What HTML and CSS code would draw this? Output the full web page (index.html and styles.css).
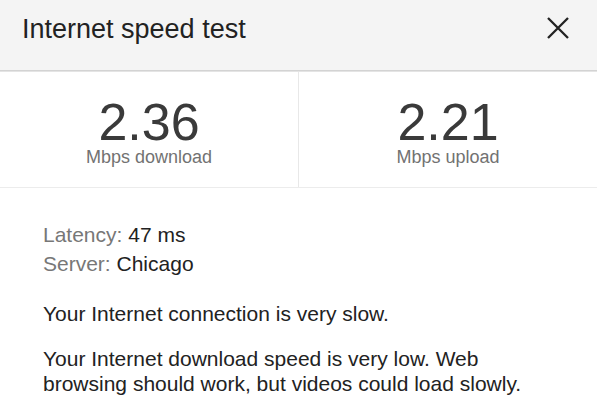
FILE: index.html
```html
<!DOCTYPE html>
<html lang="en">
<head>
    <meta charset="UTF-8">
    <meta name="viewport" content="width=device-width, initial-scale=1.0">
    <title>Internet speed test</title>
    <link rel="stylesheet" href="styles.css">
</head>
<body>
    <div class="dialog">
        <div class="head">
            <span class="title">Internet speed test</span>
            <span class="close">
                <svg width="22" height="22" viewBox="0 0 22 22">
                    <path d="M1 1L21 21M21 1L1 21" stroke="#222" stroke-width="2.3" fill="none"/>
                </svg>
            </span>
        </div>
        <div class="stats">
            <div class="stat">
                <div class="num">2.36</div>
                <div class="unit">Mbps download</div>
            </div>
            <div class="stat">
                <div class="num">2.21</div>
                <div class="unit">Mbps upload</div>
            </div>
        </div>
        <div class="info">
            <div class="row"><span class="key">Latency:</span> 47 ms</div>
            <div class="row"><span class="key">Server:</span> Chicago</div>
            <p class="msg first">Your Internet connection is very slow.</p>
            <p class="msg">Your Internet download speed is very low. Web browsing should work, but videos could load slowly.</p>
        </div>
    </div>
</body>
</html>
```

FILE: styles.css
```css
body{
    margin: 0;
    background: #fff;
    font-family: "Liberation Sans", Arial, sans-serif;
    color: #222;
}
.head{
    height: 71px;
    box-sizing: border-box;
    padding: 14px 28px 0 22px;
    background: #f4f4f4;
    border-bottom: 1px solid #d3d3d3;
    box-shadow: 0 1px 0 #e4e4e4;
    display: flex;
    justify-content: space-between;
    align-items: flex-start;
}
.title{
    font-size: 27px;
    line-height: 31px;
    color: #222;
}
.close{
    display: block;
    margin-top: 3px;
}
.close svg{
    display: block;
}
.stats{
    display: grid;
    grid-template-columns: 299px 1fr;
    border-bottom: 1px solid #ececec;
    margin-top: 1px;
}
.stat{
    text-align: center;
    padding: 24px 0 20px;
}
.stat:first-child{
    border-right: 1px solid #e8e8e8;
}
.num{
    font-size: 52px;
    line-height: 52px;
    color: #3a3a3a;
}
.unit{
    font-size: 18px;
    line-height: 20px;
    margin-top: -1px;
    color: #727272;
}
.info{
    padding: 32px 0 0 43px;
    font-size: 21px;
}
.row{
    line-height: 29px;
}
.key{
    color: #777;
}
.msg{
    margin: 20px 0 0;
    line-height: 25px;
    max-width: 500px;
}
.msg.first{
    margin-top: 23px;
}
```
